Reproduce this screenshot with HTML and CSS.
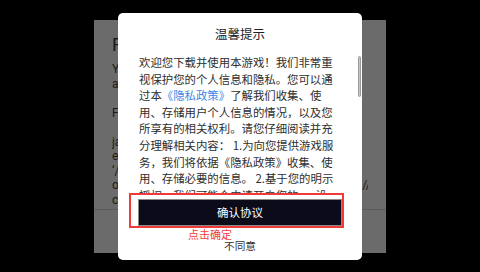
FILE: index.html
```html
<!DOCTYPE html>
<html lang="zh-CN">
<head>
<meta charset="utf-8">
<title>温馨提示</title>
<link rel="stylesheet" href="styles.css">
</head>
<body>
<div class="under-dialog">
  <div class="under-title">Friendly Reminder</div>
  <div class="under-body">
    <p>You are welcome to play this game, and<br>and we value your personal information.</p>
    <p>For details, please read the policy.</p>
    <p>java terms of data collection and use<br>each item is described below<br>‘/service/privacy’ section<br>or by visiting the official game website at https://<br>contact us with any question</p>
  </div>
  <div class="under-footer"></div>
</div>

<div class="modal">
  <h1 class="modal-title">温馨提示</h1>
  <div class="modal-scroll">
    <p class="modal-text">欢迎您下载并使用本游戏！我们非常重视保护您的个人信息和隐私。您可以通过本<a class="policy-link">《隐私政策》</a>了解我们收集、使用、存储用户个人信息的情况，以及您所享有的相关权利。请您仔细阅读并充分理解相关内容： 1.为向您提供游戏服务，我们将依据《隐私政策》收集、使用、存储必要的信息。 2.基于您的明示授权，我们可能会申请开启您的xxx设备权限，您有权拒绝或取消授权。 3.我们会采取业界领先的安全措施保护您的个人信息安全。 4.未经您的同意，我们不会从第三方处获取、共享或向其提供您的信息。 5.您可以查询、更正、删除您的个人信息，我们也提供账户注销的渠道。 6.如您是未成年人，请在监护人的陪同下阅读本政策，并在取得监护人同意后使用我们的服务。 7.我们可能会适时对本政策进行修订，修订后的内容将在游戏内公布。如您对本政策有任何疑问，可以通过游戏内客服与我们联系。请您点击“确认协议”开始使用我们的产品和服务，感谢您的信任与支持！</p>
  </div>
  <span class="scroll-thumb"></span>
  <button class="btn-agree" type="button">确认协议</button>
  <button class="btn-decline" type="button">不同意</button>
  <div class="mark-box"></div>
  <div class="mark-label">点击确定</div>
</div>
</body>
</html>
```
FILE: styles.css
```css
html, body {
  margin: 0;
  padding: 0;
}
body {
  width: 480px;
  height: 272px;
  background: #000;
  display: flex;
  align-items: center;
  justify-content: center;
  overflow: hidden;
}

/* dimmed English dialog underneath */
.under-dialog {
  width: 292px;
  height: 233px;
  margin-top: 1px;
  background: #6b6b6b;
  display: flex;
  flex-direction: column;
  font-family: Roboto, "Liberation Sans", sans-serif;
  color: #1a1a1a;
  overflow: hidden;
}
.under-title {
  padding: 14px 18px 0;
  font-size: 18px;
  line-height: 22px;
  white-space: nowrap;
}
.under-body {
  flex: 1;
  margin: 6px 18px 0 18px;
  font-size: 12px;
  line-height: 14.5px;
  white-space: nowrap;
  overflow: hidden;
}
.under-body p {
  margin: 0 0 14.5px;
}
.under-footer {
  height: 43px;
  border-top: 1px solid #5a5a5a;
}

/* white privacy dialog */
.modal {
  position: fixed;
  left: 118px;
  top: 13px;
  width: 244px;
  height: 247px;
  background: #fff;
  border-radius: 5px;
  display: flex;
  flex-direction: column;
  font-family: "Noto Sans CJK SC", "Noto Sans", sans-serif;
  color: #333;
}
.modal-title {
  margin: 0;
  padding-top: 12px;
  font-size: 12.5px;
  line-height: 18px;
  font-weight: normal;
  text-align: center;
  color: #222;
}
.modal-scroll {
  flex: none;
  height: 140px;
  margin: 11px 4px 0 21px;
  overflow: hidden;
}
.scroll-thumb {
  position: absolute;
  left: 240px;
  top: 43px;
  width: 3px;
  height: 41px;
  box-sizing: border-box;
  background: #c6c6c6;
  border: 1px solid #9a9a9a;
  border-radius: 2px;
}
.modal-text {
  margin: 0;
  width: 196px;
  font-size: 11.4px;
  line-height: 16.6px;
  color: #2e2e2e;
}
.policy-link {
  color: #3b86e8;
}
.btn-agree {
  flex: none;
  margin: 5px 20px 0;
  height: 27px;
  padding: 0;
  border: 1px solid #8a8a8a;
  background: #0b0b19;
  color: #fff;
  font-family: inherit;
  font-size: 11.5px;
  line-height: 25px;
}
.btn-decline {
  flex: none;
  margin: 12px auto 0;
  padding: 0;
  border: 0;
  background: none;
  color: #333;
  font-family: inherit;
  font-size: 10.7px;
  line-height: 16px;
}

/* red annotation overlay */
.mark-box {
  position: absolute;
  left: 11px;
  top: 180px;
  width: 215px;
  height: 35px;
  box-sizing: border-box;
  border: 2px solid #f03a3a;
}
.mark-label {
  position: absolute;
  left: 70px;
  top: 214px;
  font-size: 11px;
  line-height: 14px;
  color: #f23c3c;
}
```
